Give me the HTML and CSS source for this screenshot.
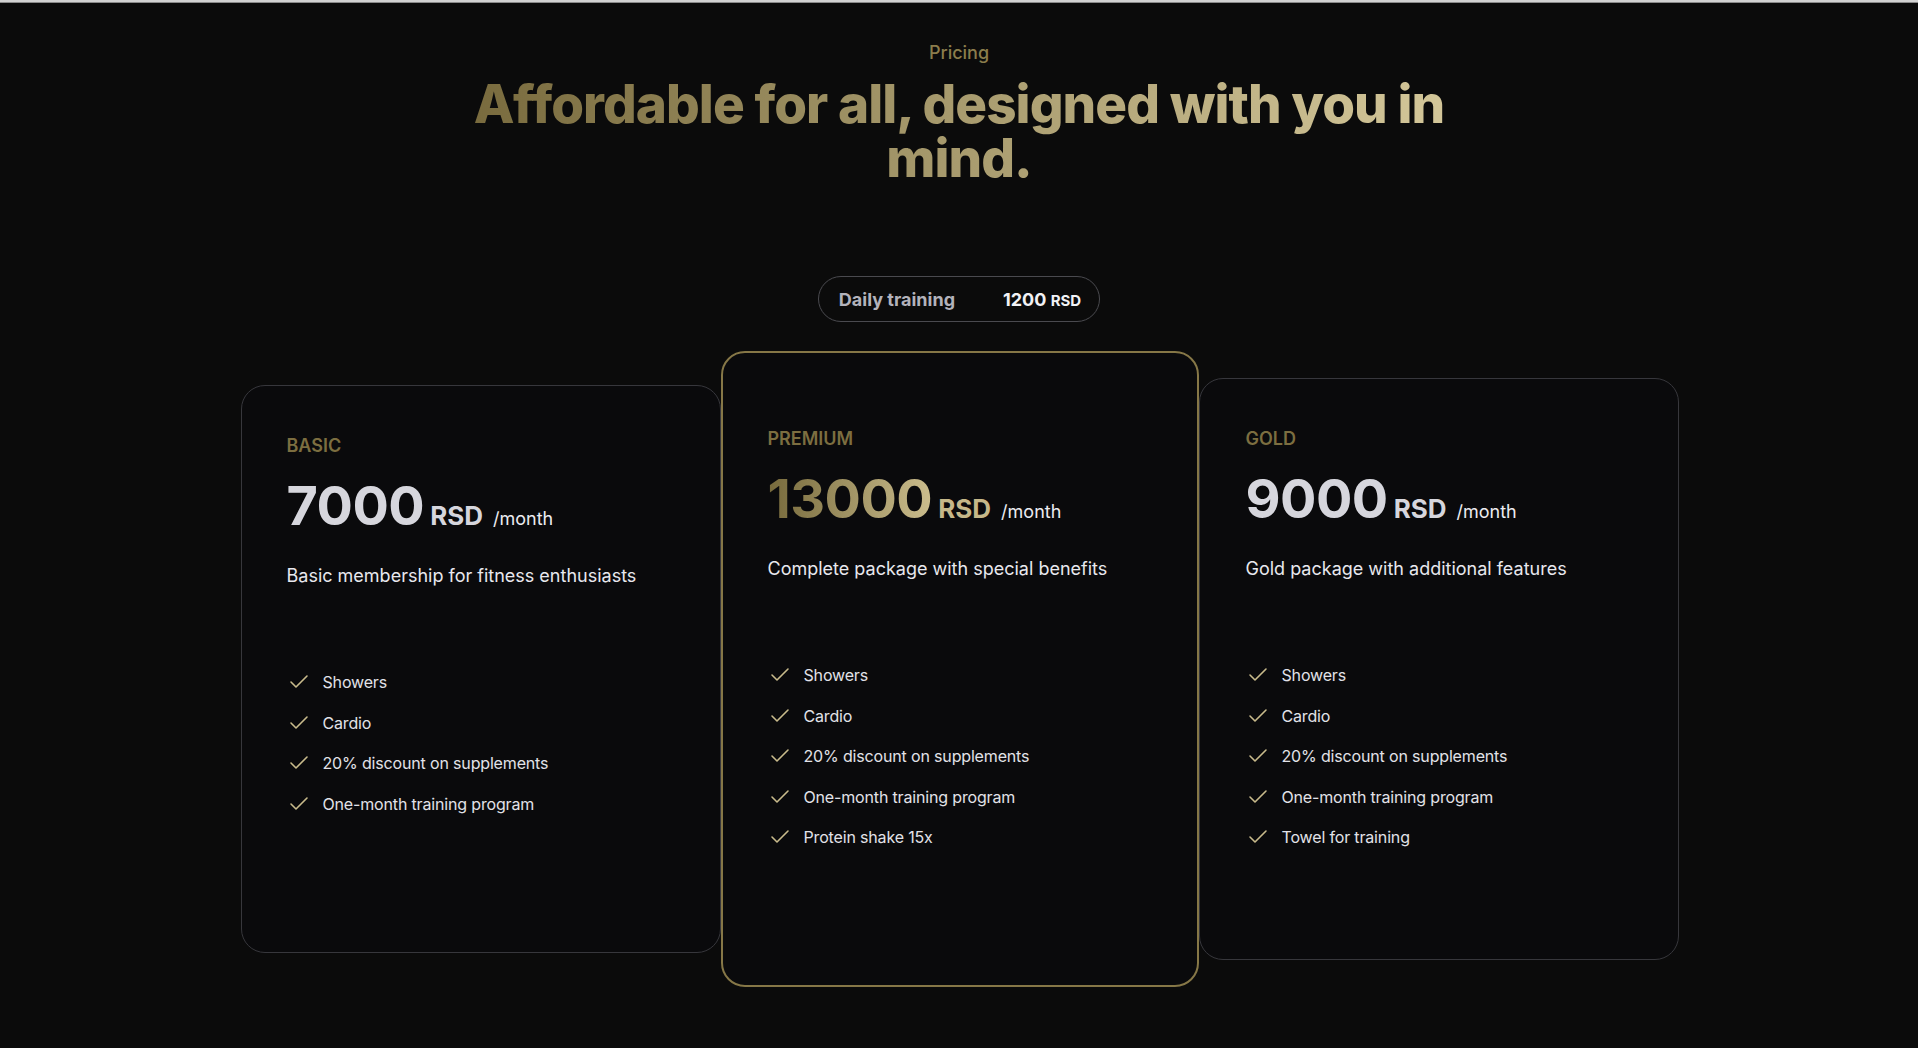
FILE: index.html
```html
<!DOCTYPE html>
<html lang="en">
<head>
<meta charset="utf-8">
<title>Pricing</title>
<link rel="stylesheet" href="styles.css">
</head>
<body>
<div class="topbar"></div>
<section class="pricing">
  <p class="eyebrow">Pricing</p>
  <h2 class="title"><span class="title-line">Affordable for all, designed with you in</span><span class="title-line">mind.</span></h2>
  <div class="daily">
    <span class="daily-label">Daily training</span>
    <span class="daily-price">1200 <small>RSD</small></span>
  </div>
  <div class="plans">
    <article class="plan plan--basic">
      <p class="plan-name">Basic</p>
      <div class="plan-price"><span class="amount">7000</span><span class="currency">RSD</span><span class="period">/month</span></div>
      <p class="plan-desc">Basic membership for fitness enthusiasts</p>
      <ul class="features">
        <li><svg viewBox="0 0 24 24"><path d="M20 6 9 17l-5-5"/></svg><span>Showers</span></li>
        <li><svg viewBox="0 0 24 24"><path d="M20 6 9 17l-5-5"/></svg><span>Cardio</span></li>
        <li><svg viewBox="0 0 24 24"><path d="M20 6 9 17l-5-5"/></svg><span>20% discount on supplements</span></li>
        <li><svg viewBox="0 0 24 24"><path d="M20 6 9 17l-5-5"/></svg><span>One-month training program</span></li>
      </ul>
    </article>
    <article class="plan plan--premium">
      <p class="plan-name">Premium</p>
      <div class="plan-price"><span class="amount amount--gold">13000</span><span class="currency currency--gold">RSD</span><span class="period">/month</span></div>
      <p class="plan-desc">Complete package with special benefits</p>
      <ul class="features">
        <li><svg viewBox="0 0 24 24"><path d="M20 6 9 17l-5-5"/></svg><span>Showers</span></li>
        <li><svg viewBox="0 0 24 24"><path d="M20 6 9 17l-5-5"/></svg><span>Cardio</span></li>
        <li><svg viewBox="0 0 24 24"><path d="M20 6 9 17l-5-5"/></svg><span>20% discount on supplements</span></li>
        <li><svg viewBox="0 0 24 24"><path d="M20 6 9 17l-5-5"/></svg><span>One-month training program</span></li>
        <li><svg viewBox="0 0 24 24"><path d="M20 6 9 17l-5-5"/></svg><span>Protein shake 15x</span></li>
      </ul>
    </article>
    <article class="plan plan--gold">
      <p class="plan-name">Gold</p>
      <div class="plan-price"><span class="amount">9000</span><span class="currency">RSD</span><span class="period">/month</span></div>
      <p class="plan-desc">Gold package with additional features</p>
      <ul class="features">
        <li><svg viewBox="0 0 24 24"><path d="M20 6 9 17l-5-5"/></svg><span>Showers</span></li>
        <li><svg viewBox="0 0 24 24"><path d="M20 6 9 17l-5-5"/></svg><span>Cardio</span></li>
        <li><svg viewBox="0 0 24 24"><path d="M20 6 9 17l-5-5"/></svg><span>20% discount on supplements</span></li>
        <li><svg viewBox="0 0 24 24"><path d="M20 6 9 17l-5-5"/></svg><span>One-month training program</span></li>
        <li><svg viewBox="0 0 24 24"><path d="M20 6 9 17l-5-5"/></svg><span>Towel for training</span></li>
      </ul>
    </article>
  </div>
</section>
</body>
</html>
```

FILE: styles.css
```css
html, body {
  margin: 0;
  padding: 0;
  background: #0b0b0b;
}

body {
  font-family: Inter, "Noto Sans", "Liberation Sans", sans-serif;
  color: #e6e6ec;
  min-height: 1048px;
}

.topbar {
  height: 3px;
  background: linear-gradient(#d2d2d2 0 2px, #8a8a8a 2px 3px);
}

.pricing {
  display: flex;
  flex-direction: column;
  align-items: center;
  padding-top: 37.5px;
}

.eyebrow {
  margin: 0;
  font-size: 18px;
  line-height: 24px;
  font-weight: 500;
  color: #8b7d4c;
}

.title {
  margin: 12px 0 0;
  display: flex;
  flex-direction: column;
  align-items: center;
  font-size: 53px;
  line-height: 54px;
  font-weight: 800;
  letter-spacing: -0.018em;
  text-align: center;
  background: linear-gradient(90deg, #796b3e 0%, #a89b6e 50%, #d3c699 100%);
  -webkit-background-clip: text;
  background-clip: text;
  color: transparent;
}

.title-line {
  display: block;
  height: 54px;
  white-space: nowrap;
}

.daily {
  margin-top: 91.5px;
  box-sizing: border-box;
  height: 46px;
  border: 1px solid #4a4a4f;
  border-radius: 999px;
  display: flex;
  align-items: center;
  gap: 48px;
  padding: 0 18px 0 20px;
  font-size: 18px;
  font-weight: 700;
}

.daily-label {
  color: #b3b3bb;
}

.daily-price {
  color: #f2f2f5;
}

.daily-price small {
  font-size: 15px;
  font-weight: 700;
}

.plans {
  margin-top: 29px;
  padding-left: 1px;
  display: grid;
  grid-template-columns: 480px 478px 480px;
  align-items: center;
}

.plan {
  box-sizing: border-box;
  background: #0a0a0c;
  border: 1px solid #37373c;
  border-radius: 24px;
  padding: 47.5px 45px 0;
}

.plan--basic {
  height: 568px;
}

.plan--premium {
  height: 636px;
  padding-top: 73.5px;
  border: 2px solid #867747;
  z-index: 1;
  position: relative;
}

.plan--gold {
  height: 582px;
  padding-left: 46px;
}

.plan-name {
  margin: 0;
  font-size: 18px;
  line-height: 24px;
  font-weight: 600;
  color: #7c6e40;
  text-transform: uppercase;
}

.plan-price {
  margin-top: 18px;
  font-size: 54px;
  line-height: 60px;
  font-weight: 700;
  color: #d6d6dd;
  white-space: nowrap;
}

.amount {
  letter-spacing: -0.01em;
}

.amount--gold {
  background: linear-gradient(90deg, #776a3c 0%, #cbbd8d 100%);
  -webkit-background-clip: text;
  background-clip: text;
  color: transparent;
}

.currency {
  font-size: 26px;
  line-height: 1;
  margin-left: 6px;
}

.currency--gold {
  color: #c6b889;
}

.period {
  font-size: 18px;
  line-height: 1;
  font-weight: 400;
  color: #ececf1;
  margin-left: 10px;
}

.plan-desc {
  margin: 26px 0 0;
  font-size: 18px;
  line-height: 27px;
  color: #e8e8ee;
}

.features {
  list-style: none;
  margin: 81.5px 0 0;
  padding: 0;
  display: flex;
  flex-direction: column;
  gap: 16.6px;
}

.features li {
  display: flex;
  align-items: center;
  gap: 12px;
  height: 24px;
  font-size: 16px;
  line-height: 24px;
  letter-spacing: -0.01em;
  color: #e2e2e8;
}

.features svg {
  width: 24px;
  height: 24px;
  flex: none;
  fill: none;
  stroke: #c9bb8c;
  stroke-width: 1.6;
  stroke-linecap: round;
  stroke-linejoin: round;
}
```
